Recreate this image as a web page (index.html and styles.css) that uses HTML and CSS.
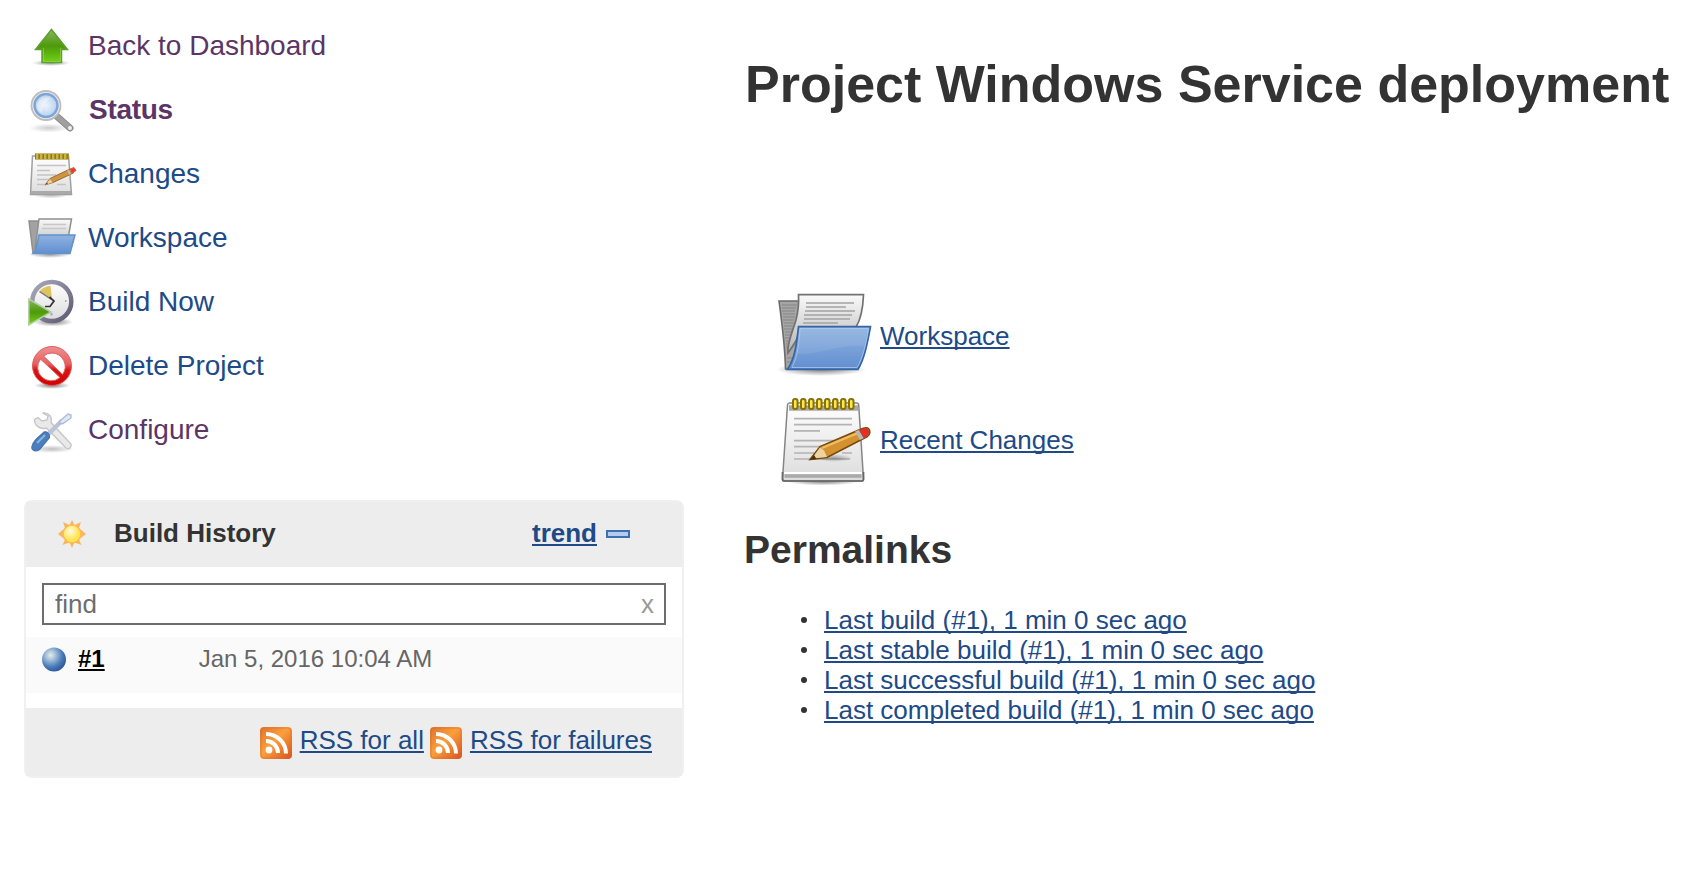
FILE: index.html
```html
<!DOCTYPE html>
<html lang="en">
<head>
<meta charset="utf-8">
<title>Windows Service deployment [Jenkins]</title>
<link rel="stylesheet" href="styles.css">
</head>
<body>
<svg class="defs" width="0" height="0" aria-hidden="true">
  <defs>
    <linearGradient id="green" x1="0" y1="0" x2="0" y2="1"><stop offset="0" stop-color="#8ab562"/><stop offset=".5" stop-color="#4e9a0a"/><stop offset="1" stop-color="#73d216"/></linearGradient>
    <linearGradient id="blue" x1="0" y1="0" x2="0" y2="1"><stop offset="0" stop-color="#90b3e0"/><stop offset="1" stop-color="#628fd1"/></linearGradient>
    <linearGradient id="paper" x1="0" y1="0" x2="0" y2="1"><stop offset="0" stop-color="#fff"/><stop offset="1" stop-color="#dcdcdc"/></linearGradient>
    <linearGradient id="sheet" x1="0" y1="0" x2="0" y2="1"><stop offset="0" stop-color="#fafafa"/><stop offset="1" stop-color="#b4b4b4"/></linearGradient>
    <linearGradient id="red" x1="0" y1="0" x2="0" y2="1"><stop offset="0" stop-color="#f09090"/><stop offset=".45" stop-color="#e66060"/><stop offset=".6" stop-color="#d91414"/><stop offset="1" stop-color="#d40000"/></linearGradient>
    <linearGradient id="rim" x1="0" y1="0" x2="1" y2="1"><stop offset="0" stop-color="#aaaabc"/><stop offset="1" stop-color="#5c5872"/></linearGradient>
    <linearGradient id="rss" x1="0" y1="0" x2="1" y2="1"><stop offset="0" stop-color="#e0702a"/><stop offset=".45" stop-color="#fa9f3c"/><stop offset="1" stop-color="#d9501c"/></linearGradient>
    <radialGradient id="shadow"><stop offset="0" stop-color="#000" stop-opacity=".5"/><stop offset="1" stop-color="#000" stop-opacity="0"/></radialGradient>
    <radialGradient id="lens"><stop offset="0" stop-color="#edf4fc"/><stop offset="1" stop-color="#b7d0ee"/></radialGradient>
    <radialGradient id="ball" cx=".36" cy=".32" r=".7"><stop offset="0" stop-color="#e8eedc"/><stop offset=".3" stop-color="#a2bfdc"/><stop offset=".7" stop-color="#4a7ab8"/><stop offset="1" stop-color="#2e5a9c"/></radialGradient>
    <radialGradient id="sun" cx=".4" cy=".35"><stop offset="0" stop-color="#fffbe0"/><stop offset="1" stop-color="#ffe44c"/></radialGradient>
    <symbol id="feed" viewBox="0 0 32 32">
      <rect width="32" height="32" rx="4" fill="url(#rss)"/>
      <rect x="1" y="1" width="30" height="30" rx="3" fill="none" stroke="#d96a2c" stroke-opacity=".5"/>
      <circle cx="9" cy="23" r="3.400" fill="#fff"/>
      <path d="M6 14a12 12 0 0 1 12 12M6 7a20 19.500 0 0 1 20 19.500" fill="none" stroke="#fff" stroke-width="4"/>
    </symbol>
  </defs>
</svg>

<div class="page">
  <aside class="side">
    <nav class="tasks">
      <a class="task visited" href="#">
        <svg class="icon" viewBox="0 0 48 48"><ellipse cx="23" cy="41" rx="19" ry="3" fill="url(#shadow)" opacity=".8"/><path d="M23.500 7.500 39.500 27.500H33.500V40.500H14V27.500H7.500z" fill="url(#green)" stroke="#5ba02f" stroke-width="1.500"/><path d="M15.500 26v13.500h17V26" fill="none" stroke="#a8dc70" stroke-opacity=".5"/></svg>
        <span>Back to Dashboard</span></a>
      <a class="task visited current" href="#">
        <svg class="icon" viewBox="0 0 48 48"><ellipse cx="21" cy="42" rx="20" ry="4.500" fill="url(#shadow)" opacity=".4"/><path d="M29 30.500 42 42" stroke="#8a8a8a" stroke-width="7" stroke-linecap="round"/><path d="M29 30.500 42 42" stroke="#a0a0a0" stroke-width="5" stroke-linecap="round"/><circle cx="42" cy="42" r="2" fill="#eee"/><circle cx="18" cy="19.500" r="14.500" fill="#f2f2f2" stroke="#bdbdbd" stroke-width="1.800"/><circle cx="18" cy="19.500" r="11.500" fill="url(#lens)" stroke="#7ea5d8" stroke-width="2.400"/><path d="M9 20c1-7 7-10 14-8-4 3-8 7-9 15-3-1-5-4-5-7" fill="#fff" opacity=".4"/></svg>
        <span>Status</span></a>
      <a class="task" href="#">
        <svg class="icon" viewBox="0 0 48 48"><ellipse cx="23" cy="45" rx="18" ry="3.500" fill="url(#shadow)" opacity=".6"/><path d="M4.500 6h36l3 38.500H2.500z" fill="url(#paper)" stroke="#a0a0a0" stroke-width="1.500"/><path d="M3 42.500h40" stroke="#aaa" stroke-width="3"/><path d="M7 6.500h34" stroke="#8e7a26" stroke-width="6"/><path d="M8 6.500h32.500" stroke="#c9b43c" stroke-width="5.500" stroke-dasharray="2.400 1.600"/><path d="M9 15.500h29M9 20.500h13M9 25h19M9 29.500h12M9 34.500h8M29 34.500h9" stroke="#c3c3c3" stroke-width="1.700"/><path d="m17 35 5-6.500 20-9.500 3.500 4-20.500 9.500z" fill="#d09440" stroke="#9a6c2c"/><path d="m17 35 5-6 2.500 3.500z" fill="#ead0a0"/><path d="m17 35 2-2.500 1 1z" fill="#5a3a0c"/><path d="m40 20 2 4.500" stroke="#bbb" stroke-width="2"/><path d="m42 19 4-1.500 2 3-4 3z" fill="#ee3930" stroke="#c96a4a"/></svg>
        <span>Changes</span></a>
      <a class="task" href="#">
        <svg class="icon" viewBox="0 0 48 48"><ellipse cx="22" cy="40.500" rx="21" ry="3.500" fill="url(#shadow)" opacity=".8"/><path d="M1 7h10L9 39H5z" fill="#a2a2a2" stroke="#909090" stroke-width="1.500"/><path d="M11 5h32.500L40 25H11L7 35z" fill="url(#sheet)" stroke="#909090" stroke-width="1.500"/><path d="M15 10.500h23M14 14.500h24" stroke="#c8c8c8" stroke-width="1.500"/><path d="M11 21h36L42 39.500H5c4-4 4.500-11 6-18.500z" fill="url(#blue)" stroke="#6292c9" stroke-width="1.500"/></svg>
        <span>Workspace</span></a>
      <a class="task" href="#">
        <svg class="icon" viewBox="0 0 48 48"><ellipse cx="25" cy="44" rx="20" ry="4.500" fill="url(#shadow)"/><circle cx="23.800" cy="23.500" r="19.500" fill="url(#paper)" stroke="url(#rim)" stroke-width="4.500"/><path d="M11.500 13.500q4-5.500 11-5.500l1.500 13z" fill="#dfc35e"/><path d="m11.500 13.500 12 8" fill="none" stroke="#777" stroke-width="1.500"/><path d="m21.500 19 4.500 4-4 5.500h-5" fill="none" stroke="#333" stroke-width="1.700"/><path d="M37 23h1.500M23.500 35v2.500" stroke="#aaa" stroke-width="2"/><path d="M.8 21 23 34 .8 47z" fill="url(#green)" stroke="#b4cfa3" stroke-width="1.500"/></svg>
        <span>Build Now</span></a>
      <a class="task" href="#">
        <svg class="icon" viewBox="0 0 48 48"><ellipse cx="24" cy="43.500" rx="18" ry="3.500" fill="url(#shadow)"/><circle cx="24" cy="24" r="16.500" fill="#fff"/><path fill-rule="evenodd" d="M24 4.500a19.500 19.500 0 1 0 0 39 19.500 19.500 0 0 0 0-39zm0 6.500a13.500 13.500 0 0 1 10.500 21.500L15.500 14a13.500 13.500 0 0 1 8.500-3zM12.500 17l19.500 18.500A13.500 13.500 0 0 1 12.500 17z" fill="url(#red)" stroke="#dc6060"/></svg>
        <span>Delete Project</span></a>
      <a class="task visited" href="#">
        <svg class="icon" viewBox="0 0 48 48"><ellipse cx="24" cy="43" rx="22" ry="4" fill="url(#shadow)" opacity=".5"/><path d="M14.500 7c6-1 10 4 8.500 9.500l20 21.500c1 3-2 6-5 4L18.500 22c-6 2-12-2-12-8.500l3.500-2 4 3.500 5-1 1-4-5.500-3" fill="#e9e9e9" stroke="#c6c6c6" stroke-width="1.400"/><path d="m19 29.500 15-15" stroke="#b9c4d6" stroke-width="4.500"/><path d="m33 14 7-6 3 1v3L35 17.500 31 18z" fill="#dfe8f4" stroke="#adbcd5" stroke-width="1.400"/><path d="M16 26c3-1 6 2 5.500 5.500L12 43c-4 4-10 1-7.500-4 2-6 7.500-8.500 11.500-13z" fill="#4b7ebc" stroke="#4674b0" stroke-width="1.200"/><path d="m9 37 8-8" stroke="#8fb2dc" stroke-width="2"/></svg>
        <span>Configure</span></a>
    </nav>

    <section class="panel">
      <header class="panel-head">
        <svg class="weather" viewBox="0 0 28 28"><path d="m14 0 2.500 5 6.500-3-2 6 7 6-7 5.500 2.500 5.500-7-2.500L14 28l-2.500-5.500-7 2.500L7 19.500 0 14l7-6-2-6 6.500 3z" fill="#f9b560"/><circle cx="14" cy="14" r="8.800" fill="url(#sun)" stroke="#f8bd55" stroke-width="1.200"/></svg>
        <h3 class="panel-title">Build History</h3>
        <a class="trend" href="#">trend</a>
        <span class="collapse"></span>
      </header>
      <div class="search"><span>find</span><span class="clear">x</span></div>
      <div class="build">
        <svg class="ball" viewBox="0 0 26 26"><circle cx="12" cy="12.500" r="12" fill="url(#ball)"/></svg>
        <a class="number" href="#">#1</a>
        <span class="date">Jan 5, 2016 10:04 AM</span>
      </div>
      <footer class="panel-foot">
        <svg class="rss"><use href="#feed"/></svg><a class="link all" href="#">RSS for all</a>
        <svg class="rss"><use href="#feed"/></svg><a class="link" href="#">RSS for failures</a>
      </footer>
    </section>
  </aside>

  <main class="main">
    <h1 class="title">Project Windows Service deployment</h1>
    <div class="shortcuts">
      <div class="shortcut">
        <svg class="big" viewBox="0 0 96 96"><ellipse cx="45" cy="81.500" rx="45" ry="6.500" fill="url(#shadow)"/><path d="M3 13h24v20L15 81H9.500C9 58 6 35 3 13z" fill="#a6a6a6" stroke="#6b6b6b" stroke-width="1.600"/><path d="M6 17h15M6 20h14M6 23h13M7 26h12M7 29h12M7 32h11M8 35h10M8 38h9M8 41h9M9 44h7M9 47h6M9 50h6M10 53h5M10 56h4M10 59h4M11 70h6M11 74h5" stroke="#858585"/><path d="M22.500 6.700h65C87 20 85 31 80 39H25c-2 10-6 16-13 26-1-11 5-22 8-33 2-8 3-17 2.500-25.300z" fill="url(#sheet)" stroke="#727272" stroke-width="1.700"/><path d="M30 15h48M30 19h40M29 23h50M28 27h48M28 31h46M27 35h35" stroke="#a3a3a3" stroke-width="1.500"/><path d="M22.500 38.700h72c-3 16-6 32-12.500 42.600H11.500c8-12 9-26 11-42.600z" fill="url(#blue)" stroke="#3465a4" stroke-width="1.700"/><path d="M24 40.500h68.500C90 56 87 70 81 79.500H16c6-12 7-25 8-39z" fill="none" stroke="#b5cdec" stroke-opacity=".7"/><path d="M24 41h68l-4 17c-25-2-43 9-68 8 3-8 3-16 4-25z" fill="#fff" opacity=".08"/></svg>
        <a class="link" href="#">Workspace</a>
      </div>
      <div class="shortcut">
        <svg class="big" viewBox="0 0 96 96"><ellipse cx="47" cy="89.500" rx="36" ry="4" fill="url(#shadow)"/><path d="M13.500 11h67c1.500 0 2 .5 2.200 2L87.500 87c0 1.500-.5 2-2 2H8.500C7 89 6.500 88.500 6.500 87L11.500 13c.2-1.500.7-2 2-2z" fill="url(#paper)" stroke="#858585" stroke-width="1.500"/><path d="M6.500 80v7c0 1.500.5 2 2 2h77c2 0 2-.5 2-2v-7" fill="none" stroke="#666" stroke-width="1.700"/><path d="M13 16h69" stroke="#a9a9a9" stroke-width="5.500"/><path d="M8 81h78" stroke="#fff" stroke-width="2"/><path d="M8.500 84h77" stroke="#a9a9a9" stroke-width="3.500"/><path d="M18 26.700h58M18 32.700h58M18 38.900h26M18 48.700h48M18 54.700h30M18 61h20M66 61h10M18 67h56" stroke="#b3b3b3" stroke-width="1.700"/><g fill="#fce94f" stroke="#8a7105" stroke-width="2"><rect x="17" y="7" width="4.500" height="10" rx="2"/><rect x="25" y="7" width="4.500" height="10" rx="2"/><rect x="33" y="7" width="4.500" height="10" rx="2"/><rect x="41" y="7" width="4.500" height="10" rx="2"/><rect x="49" y="7" width="4.500" height="10" rx="2"/><rect x="57" y="7" width="4.500" height="10" rx="2"/><rect x="65" y="7" width="4.500" height="10" rx="2"/><rect x="73" y="7" width="4.500" height="10" rx="2"/></g><ellipse cx="58" cy="66" rx="18" ry="4" fill="url(#shadow)" opacity=".6"/><path d="m34 67.500 10-13L84 37.500c4-2 7-2.500 8.500-1 2 2 2 6-1 8L51 65.500z" fill="#d3912f" stroke="#764a0d" stroke-width="1.500"/><path d="m46 56 36-15" stroke="#f0bd63" stroke-width="2"/><path d="m36 66.500 8-11 4 3 3 6.500z" fill="#edd5a2"/><path d="m34 68 4-5 2.500 4z" fill="#4d3006"/><path d="m79 39.500 5-2 5 8-5 2.500z" fill="#b8b8b8"/><path d="M83.500 38.500c5-3 9-2.500 9 1.500 0 3-2 5-4.500 6z" fill="#ef2929" stroke="#b23a20" stroke-width=".8"/></svg>
        <a class="link" href="#">Recent Changes</a>
      </div>
    </div>
    <h2 class="subtitle">Permalinks</h2>
    <ul class="permalinks">
      <li><a class="link" href="#">Last build (#1), 1 min 0 sec ago</a></li>
      <li><a class="link" href="#">Last stable build (#1), 1 min 0 sec ago</a></li>
      <li><a class="link" href="#">Last successful build (#1), 1 min 0 sec ago</a></li>
      <li><a class="link" href="#">Last completed build (#1), 1 min 0 sec ago</a></li>
    </ul>
  </main>
</div>
</body>
</html>
```
FILE: styles.css
```css
* { box-sizing: border-box; }
html, body { margin: 0; background: #fff; }
body {
  font: 26px/30px "Liberation Sans", Arial, sans-serif;
  color: #333;
  overflow: hidden;
}
svg { display: block; flex: none; overflow: visible; }
.defs { position: absolute; }
a { color: #204a87; white-space: nowrap; }
.link, .trend, .number {
  text-decoration: underline;
  text-decoration-thickness: 2px;
  text-underline-offset: 2px;
  text-decoration-skip-ink: none;
}

.page { display: grid; grid-template-columns: 683px 1fr; height: 874px; }
.side { padding: 14px 0 0 24px; }

.tasks { display: flex; flex-direction: column; padding-left: 4px; }
.task {
  display: flex;
  align-items: center;
  gap: 12px;
  height: 64px;
  font-size: 28px;
  text-decoration: none;
}
.visited { color: #5c3566; }
.current { gap: 13px; font-weight: bold; letter-spacing: -.3px; }
.icon { width: 48px; height: 48px; }

.panel {
  display: flex;
  flex-direction: column;
  width: 660px;
  height: 278px;
  margin-top: 38px;
  border: 2px solid #f0f0f0;
  border-radius: 8px;
}
.panel-head {
  display: flex;
  align-items: center;
  height: 65px;
  padding: 0 52px 4px 32px;
  background: #ededed;
  font-weight: bold;
}
.weather { width: 28px; height: 28px; margin-top: 2px; }
.panel-title { flex: 1; margin: 0 0 0 28px; font-size: 26px; }
.collapse {
  width: 24px;
  height: 8px;
  margin: 2px 0 0 9px;
  border: 2px solid #3f6fae;
  background: #b4cceb;
}
.search {
  display: flex;
  justify-content: space-between;
  align-items: center;
  height: 42px;
  margin: 16px 16px 12px;
  padding: 0 10px 0 11px;
  border: 2px solid #6d6d6d;
  color: #6d6d6d;
}
.clear { color: #999; }
.build {
  display: flex;
  align-items: flex-start;
  height: 56px;
  margin-bottom: 15px;
  padding: 7px 16px;
  background: #fafafa;
  font-size: 24px;
  color: #666;
}
.ball { width: 26px; height: 26px; margin-top: 3px; }
.number { margin-left: 10px; color: #000; font-weight: bold; }
.date { margin-left: 94px; }
.panel-foot {
  display: flex;
  flex: 1;
  align-items: flex-start;
  justify-content: flex-end;
  padding: 17px 30px 0 0;
  background: #ededed;
}
.rss { width: 32px; height: 32px; margin: 2px 8px 0 0; }
.all { margin-right: 6px; }

.main { padding: 54px 0 0 61px; }
.title { margin: 0 0 0 1px; font-size: 52px; line-height: 60px; white-space: nowrap; }
.shortcuts { display: flex; flex-direction: column; gap: 8px; padding: 174px 0 0 32px; }
.shortcut { display: flex; align-items: center; gap: 8px; height: 96px; }
.big { width: 96px; height: 96px; }
.subtitle { margin: 39px 0 33px; font-size: 39px; line-height: 45px; }
.permalinks { margin: 0; padding: 0 0 0 57px; list-style: none; }
.permalinks li { display: flex; align-items: center; gap: 17px; }
.permalinks li::before {
  content: "";
  width: 6px;
  height: 6px;
  border-radius: 50%;
  background: #333;
}
```
